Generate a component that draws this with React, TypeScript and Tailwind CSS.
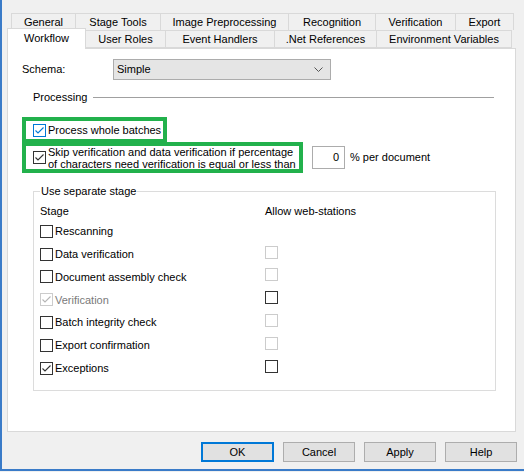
import React from 'react';

type BoxKind = 'normal' | 'hover' | 'disabled';

function CheckBox({ checked = false, kind = 'normal' }: { checked?: boolean; kind?: BoxKind }) {
  const border =
    kind === 'hover' ? 'border-[#0078d7]' : kind === 'disabled' ? 'border-[#cccccc]' : 'border-[#333333]';
  const stroke = kind === 'hover' ? '#0078d7' : kind === 'disabled' ? '#b5b5b5' : '#333333';
  return (
    <span className={`flex h-[13px] w-[13px] shrink-0 items-center justify-center border bg-white ${border}`}>
      {checked && (
        <svg width="11" height="11" viewBox="0 0 11 11">
          <path d="M1.5 5.5 L4 8 L9.5 2.5" fill="none" stroke={stroke} strokeWidth="1.1" />
        </svg>
      )}
    </span>
  );
}

const backTabs = [
  { label: 'General', w: 'w-[65px]' },
  { label: 'Stage Tools', w: 'w-[85px]' },
  { label: 'Image Preprocessing', w: 'w-[128px]' },
  { label: 'Recognition', w: 'w-[87px]' },
  { label: 'Verification', w: 'w-[80px]' },
  { label: 'Export', w: 'w-[58px]' },
];

const frontTabs = [
  { label: 'User Roles', w: 'w-[80px]' },
  { label: 'Event Handlers', w: 'w-[109px]' },
  { label: '.Net References', w: 'w-[102px]' },
  { label: 'Environment Variables', w: 'w-[135px]' },
];

const stages: { label: string; checked?: boolean; kind?: BoxKind; web?: BoxKind }[] = [
  { label: 'Rescanning' },
  { label: 'Data verification', web: 'disabled' },
  { label: 'Document assembly check', web: 'disabled' },
  { label: 'Verification', checked: true, kind: 'disabled', web: 'normal' },
  { label: 'Batch integrity check', web: 'disabled' },
  { label: 'Export confirmation', web: 'disabled' },
  { label: 'Exceptions', checked: true, web: 'normal' },
];

export default function App() {
  return (
    <div className="h-[472px] w-[524px] bg-[#f0f0f0] font-['Liberation_Sans','Arial',sans-serif] text-[11px] text-black">
      <div className="flex h-[471px] flex-col border-b-2 border-l-2 border-[#3a7bc8] pt-[13px]">
        {/* tab rows */}
        <div className="ml-[7px] flex h-[17px] items-stretch">
          {backTabs.map((t, i) => (
            <div
              key={t.label}
              className={`flex items-center justify-center whitespace-nowrap border-t border-r border-[#d9d9d9] leading-none ${t.w} ${
                i === 0 ? 'ml-[2px] border-l' : ''
              }`}
            >
              {t.label}
            </div>
          ))}
        </div>
        <div className="relative z-10 ml-[5px] flex h-[18px] items-stretch">
          <div className="-mt-[2px] -mb-[1px] flex w-[79px] items-center justify-center border-x border-t border-[#d9d9d9] bg-white pb-[1px] leading-none">
            Workflow
          </div>
          {frontTabs.map((t) => (
            <div
              key={t.label}
              className={`flex items-center justify-center whitespace-nowrap border-t border-r border-b border-[#d9d9d9] leading-none ${t.w}`}
            >
              {t.label}
            </div>
          ))}
        </div>

        {/* panel */}
        <div className="ml-[5px] flex h-[384px] w-[509px] flex-col border border-[#d9d9d9] bg-white pl-[14px]">
          <div className="mt-[10px] flex h-[21px] items-center">
            <span className="w-[91px]">Schema:</span>
            <div className="flex h-[21px] w-[218px] items-center justify-between border border-[#acacac] bg-[#e5e5e5] pl-[3px] pr-[7px]">
              <span>Simple</span>
              <svg width="9" height="5" viewBox="0 0 9 5">
                <path d="M0.5 0.5 L4.5 4.5 L8.5 0.5" fill="none" stroke="#555" strokeWidth="1" />
              </svg>
            </div>
          </div>

          <div className="mt-[10px] flex h-[14px] items-center pl-[11px] pr-[21px]">
            <span className="whitespace-nowrap">Processing</span>
            <div className="ml-[6px] h-px flex-1 bg-[#a0a0a0]" />
          </div>

          <div className="mt-[13px] flex">
            <div className="flex h-[26px] w-[145px] items-center gap-[2px] border-[4px] border-[#22b14c] pl-[7px]">
              <CheckBox checked kind="hover" />
              <span className="whitespace-nowrap">Process whole batches</span>
            </div>
          </div>

          <div className="-mt-[1px] flex items-center">
            <div className="flex h-[31px] w-[281px] items-center gap-[2px] border-[4px] border-[#22b14c] pl-[7px]">
              <CheckBox checked />
              <span className="whitespace-nowrap leading-[12px]">
                Skip verification and data verification if percentage
                <br />
                of characters need verification is equal or less than
              </span>
            </div>
            <div className="ml-[9px] flex h-[23px] w-[33px] items-center justify-end border border-[#acacac] pr-[5px]">
              0
            </div>
            <span className="ml-[5px] whitespace-nowrap">% per document</span>
          </div>

          <fieldset className="ml-[11px] mt-[11px] h-[207px] w-[463px] border border-[#dcdcdc] pl-[6px]">
            <legend className="px-[1px] leading-[14px]">Use separate stage</legend>
            <div className="mt-[6px] grid grid-cols-[225px_1fr]">
              <div className="flex h-[14px] items-center">Stage</div>
              <div className="flex h-[14px] items-center">Allow web-stations</div>
            </div>
            <div className="mt-[2px] grid grid-cols-[225px_1fr]">
              {stages.map((s) => (
                <React.Fragment key={s.label}>
                  <div className="flex h-[22.8px] items-center gap-[2px]">
                    <CheckBox checked={s.checked} kind={s.kind} />
                    <span className={`whitespace-nowrap ${s.kind === 'disabled' ? 'text-[#7a7a7a]' : ''}`}>
                      {s.label}
                    </span>
                  </div>
                  <div className="flex h-[22.8px] items-center pb-[4px]">
                    {s.web && <CheckBox kind={s.web} />}
                  </div>
                </React.Fragment>
              ))}
            </div>
          </fieldset>
        </div>

        {/* buttons */}
        <div className="mt-[10px] flex justify-end gap-[9px] pr-[7px]">
          <button className="h-[20px] w-[73px] border-2 border-[#0078d7] bg-[#e1e1e1]">OK</button>
          <button className="h-[20px] w-[72px] border border-[#adadad] bg-[#e1e1e1]">Cancel</button>
          <button className="h-[20px] w-[72px] border border-[#adadad] bg-[#e1e1e1]">Apply</button>
          <button className="h-[20px] w-[72px] border border-[#adadad] bg-[#e1e1e1]">Help</button>
        </div>
      </div>
    </div>
  );
}
